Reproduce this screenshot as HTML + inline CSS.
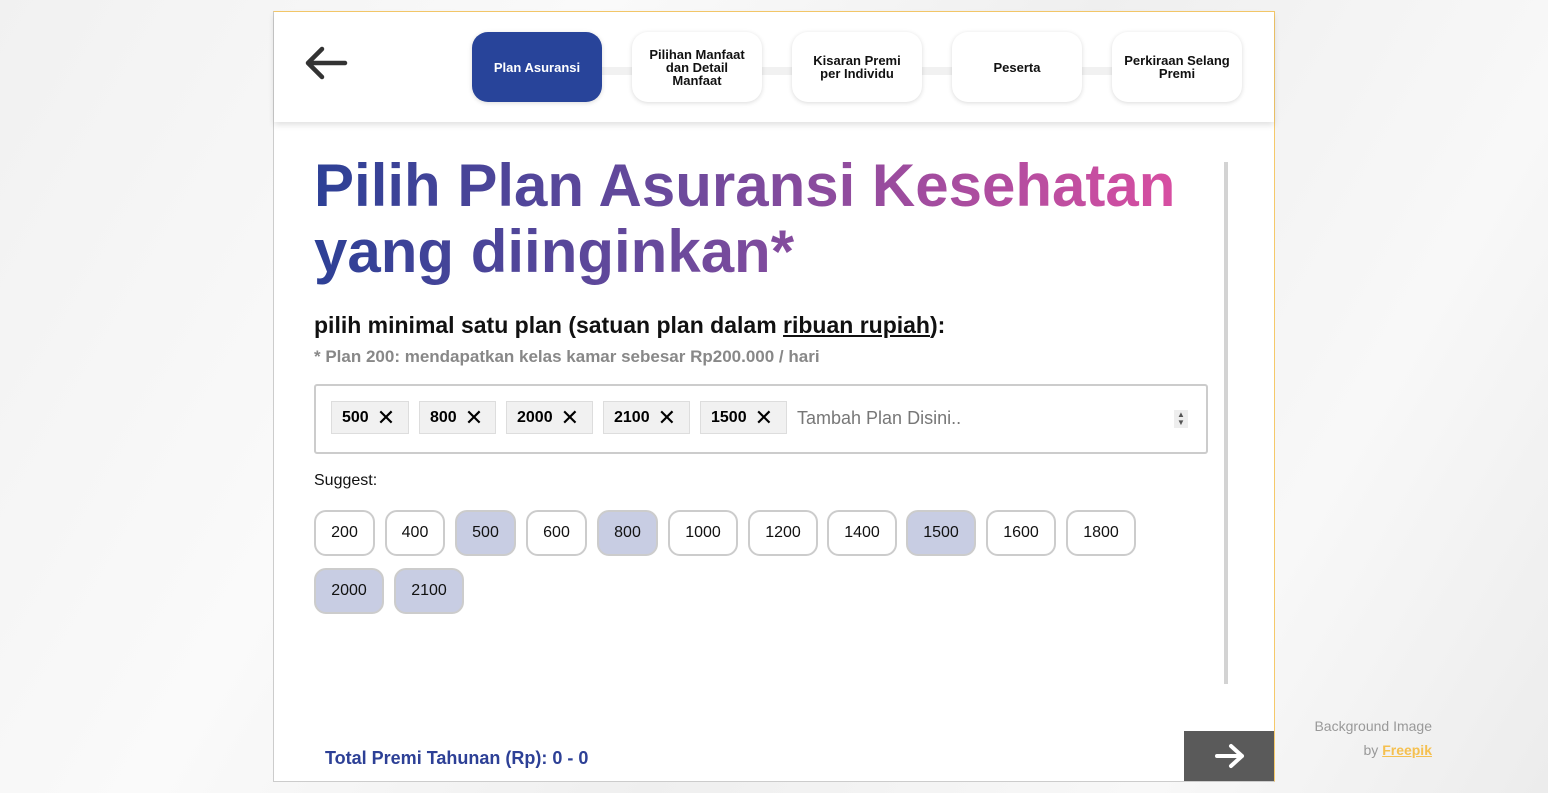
<!DOCTYPE html>
<html><head><style>
body{margin:0;width:1548px;height:793px;overflow:hidden;background:linear-gradient(120deg,#f1f1f1 0%,#fafafa 30%,#efefef 55%,#f8f8f8 80%,#ececec 100%);font-family:"Liberation Sans",sans-serif;position:relative}
.card{position:absolute;left:273px;top:11px;width:1000px;height:769px;background:#fff;border:1px solid #ccc;border-top-color:#f5c96a;border-right-color:#f5c96a}
.hdr{position:absolute;left:0;top:0;width:1000px;height:110px;box-shadow:0 3px 6px rgba(0,0,0,.12)}
.line{position:absolute;left:240px;top:55px;width:700px;height:8px;background:#f1f1f1}
.step{position:absolute;top:20px;width:130px;height:70px;border-radius:16px;background:#fff;box-shadow:0 1px 5px rgba(0,0,0,.15);display:flex;align-items:center;justify-content:center;text-align:center;font-size:13px;font-weight:bold;line-height:13px;color:#111}
.step.a{background:#28449a;color:#fff}
h1{position:absolute;left:40px;top:141px;margin:0;font-size:60px;line-height:66px;font-weight:bold;width:900px;background:linear-gradient(90deg,#2d4096 0%,#6b4a9c 40%,#e04fa2 100%);-webkit-background-clip:text;background-clip:text;color:transparent}
.sub{position:absolute;left:40px;top:300px;font-size:23px;font-weight:bold;color:#111}
.note{position:absolute;left:40px;top:335px;font-size:17px;font-weight:bold;color:#888}
.box{position:absolute;left:40px;top:372px;width:890px;height:66px;border:2px solid #ccc;border-radius:3px}
.tag{position:absolute;top:15px;height:33px;background:#f1f1f1;border:1px solid #ddd;box-sizing:border-box;font-size:16px;font-weight:bold;display:flex;align-items:center;padding-left:10px;color:#000}
.tag span{font-weight:normal;font-size:22px;margin-left:8px}
.ph{position:absolute;left:481px;top:22px;font-size:18px;color:#777}
.sug{position:absolute;left:40px;top:460px;font-size:16px;color:#111}
.chip{position:absolute;height:46px;border:2px solid #ccc;border-radius:12px;background:#fff;display:flex;align-items:center;justify-content:center;font-size:16px;color:#111;box-sizing:border-box}
.chip.s{background:#c8cde3}
.scroll{position:absolute;left:950px;top:150px;width:4px;height:522px;background:#d3d3d3}
.tot{position:absolute;left:51px;top:736px;font-size:18px;font-weight:bold;color:#2d4096}
.next{position:absolute;left:910px;top:719px;width:90px;height:50px;background:#5a5a5a}
.cr{position:absolute;left:1280px;top:714px;font-size:14px;color:#999;text-align:right;width:152px;line-height:24px;white-space:nowrap}
.cr a{color:#f5c050;font-weight:bold;text-decoration:underline}
</style></head><body>
<div class="card">
 <div class="hdr">
  <svg style="position:absolute;left:30px;top:34px" width="44" height="34" viewBox="0 0 44 34"><path d="M41 17H5M18 3L4 17L18 31" stroke="#333" stroke-width="4.5" fill="none" stroke-linecap="round" stroke-linejoin="round"/></svg>
  <div class="line"></div>
  <div class="step a" style="left:198px">Plan Asuransi</div>
  <div class="step" style="left:358px">Pilihan Manfaat<br>dan Detail<br>Manfaat</div>
  <div class="step" style="left:518px">Kisaran Premi<br>per Individu</div>
  <div class="step" style="left:678px">Peserta</div>
  <div class="step" style="left:838px">Perkiraan Selang<br>Premi</div>
 </div>
 <h1>Pilih Plan Asuransi Kesehatan<br>yang diinginkan*</h1>
 <div class="sub">pilih minimal satu plan (satuan plan dalam <u>ribuan rupiah</u>):</div>
 <div class="note">* Plan 200: mendapatkan kelas kamar sebesar Rp200.000 / hari</div>
 <div class="box">
  <div class="tag" style="left:15px;width:78px">500<span>✕</span></div>
  <div class="tag" style="left:103px;width:77px">800<span>✕</span></div>
  <div class="tag" style="left:190px;width:87px">2000<span>✕</span></div>
  <div class="tag" style="left:287px;width:87px">2100<span>✕</span></div>
  <div class="tag" style="left:384px;width:87px">1500<span>✕</span></div>
  <div class="ph">Tambah Plan Disini..</div>
  <div style="position:absolute;left:858px;top:24px;font-size:8px;color:#555;line-height:8px;background:#eee;padding:1px 3px">▲<br>▼</div>
 </div>
 <div class="sug">Suggest:</div>
 <div class="chip" style="left:40px;top:498px;width:61px">200</div>
 <div class="chip" style="left:111px;top:498px;width:60px">400</div>
 <div class="chip s" style="left:181px;top:498px;width:61px">500</div>
 <div class="chip" style="left:252px;top:498px;width:61px">600</div>
 <div class="chip s" style="left:323px;top:498px;width:61px">800</div>
 <div class="chip" style="left:394px;top:498px;width:70px">1000</div>
 <div class="chip" style="left:474px;top:498px;width:70px">1200</div>
 <div class="chip" style="left:553px;top:498px;width:70px">1400</div>
 <div class="chip s" style="left:632px;top:498px;width:70px">1500</div>
 <div class="chip" style="left:712px;top:498px;width:70px">1600</div>
 <div class="chip" style="left:792px;top:498px;width:70px">1800</div>
 <div class="chip s" style="left:40px;top:556px;width:70px">2000</div>
 <div class="chip s" style="left:120px;top:556px;width:70px">2100</div>
 <div class="scroll"></div>
 <div class="tot">Total Premi Tahunan (Rp): 0 - 0</div>
 <div class="next"><svg style="position:absolute;left:30px;top:12px" width="32" height="26" viewBox="0 0 32 26"><path d="M3 13H28M17 3L28 13L17 23" stroke="#fff" stroke-width="4" fill="none" stroke-linecap="round" stroke-linejoin="round"/></svg></div>
</div>
<div class="cr">Background Image<br>by <a>Freepik</a></div>
</body></html>
